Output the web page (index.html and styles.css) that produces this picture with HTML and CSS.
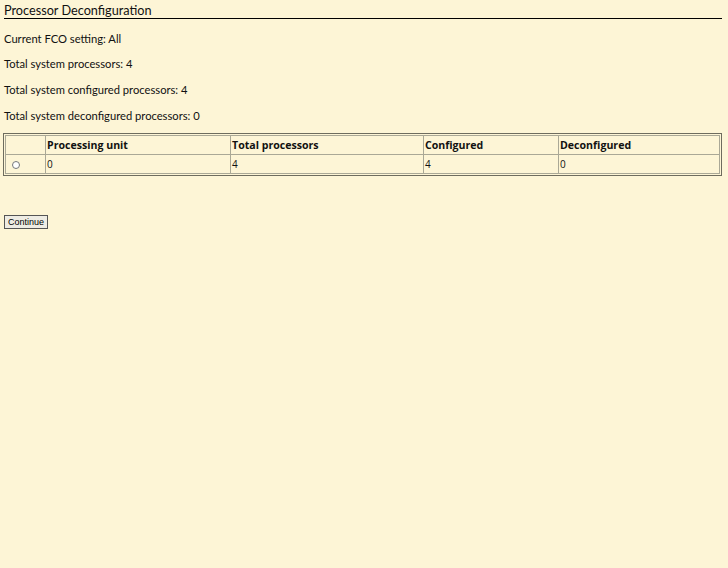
FILE: index.html
```html
<!DOCTYPE html>
<html lang="en">
<head>
  <meta charset="UTF-8" />
  <title>Processor Deconfiguration</title>
  <link rel="stylesheet" href="styles.css">
</head>
<body>

  <div class="page">
    <h1 class="title">Processor Deconfiguration</h1>

    <p>Current FCO setting: All</p>
    <p>Total system processors: 4</p>
    <p>Total system configured processors: 4</p>
    <p>Total system deconfigured processors: 0</p>

    <div class="grid">
      <table class="units">
        <colgroup>
          <col class="sel">
          <col class="c1">
          <col class="c2">
          <col class="c3">
          <col>
        </colgroup>
        <tr>
          <th></th>
          <th>Processing unit</th>
          <th>Total processors</th>
          <th>Configured</th>
          <th>Deconfigured</th>
        </tr>
        <tr>
          <td><input type="radio" name="unit"></td>
          <td>0</td>
          <td>4</td>
          <td>4</td>
          <td>0</td>
        </tr>
      </table>
    </div>

    <button class="continue">Continue</button>
  </div>

</body>
</html>
```

FILE: styles.css
```css
body {
  margin: 0;
  background: #fdf5d6;
  font-family: "Lato", "Liberation Sans", sans-serif;
  font-size: 11.2px;
  color: #111;
}

.page {
  padding: 3px 6px 0 3px;
}

.title {
  font-size: 12.7px;
  font-weight: normal;
  margin: 0 0 0 1px;
  padding-bottom: 1px;
  border-bottom: 1px solid #000;
  line-height: 14px;
}

p {
  margin: 0 0 0 1px;
  line-height: 13px;
  padding-top: 12.5px;
}

p:last-of-type {
  padding-top: 13px;
}

/* outer frame with a 1px gap round the cells */
.grid {
  margin-top: 11px;
  border: 1px solid #6e6c5e;
  padding: 1px;
}

.units {
  width: 100%;
  table-layout: fixed;
  border-collapse: collapse;
}

.units col.sel { width: 40px; }
.units col.c1 { width: 185px; }
.units col.c2 { width: 193px; }
.units col.c3 { width: 135px; }

.units th, .units td {
  border: 1px solid #aaa896;
  text-align: left;
  padding: 0 1px;
  height: 18px;
  line-height: 14px;
  font-family: "Open Sans", "Liberation Sans", sans-serif;
}

.units th {
  font-weight: bold;
  font-size: 10.6px;
}

.units td {
  font-size: 10px;
}

.units input[type="radio"] {
  margin: 0 0 0 5px;
  width: 8px;
  height: 8px;
  vertical-align: middle;
}

.continue {
  margin: 39px 0 0 1px;
  font-family: "Liberation Sans", Arial, sans-serif;
  font-size: 9px;
  padding: 0 3px;
  height: 14px;
  border: 1px solid #555;
  background: #eeece4;
  border-radius: 0;
}
```
